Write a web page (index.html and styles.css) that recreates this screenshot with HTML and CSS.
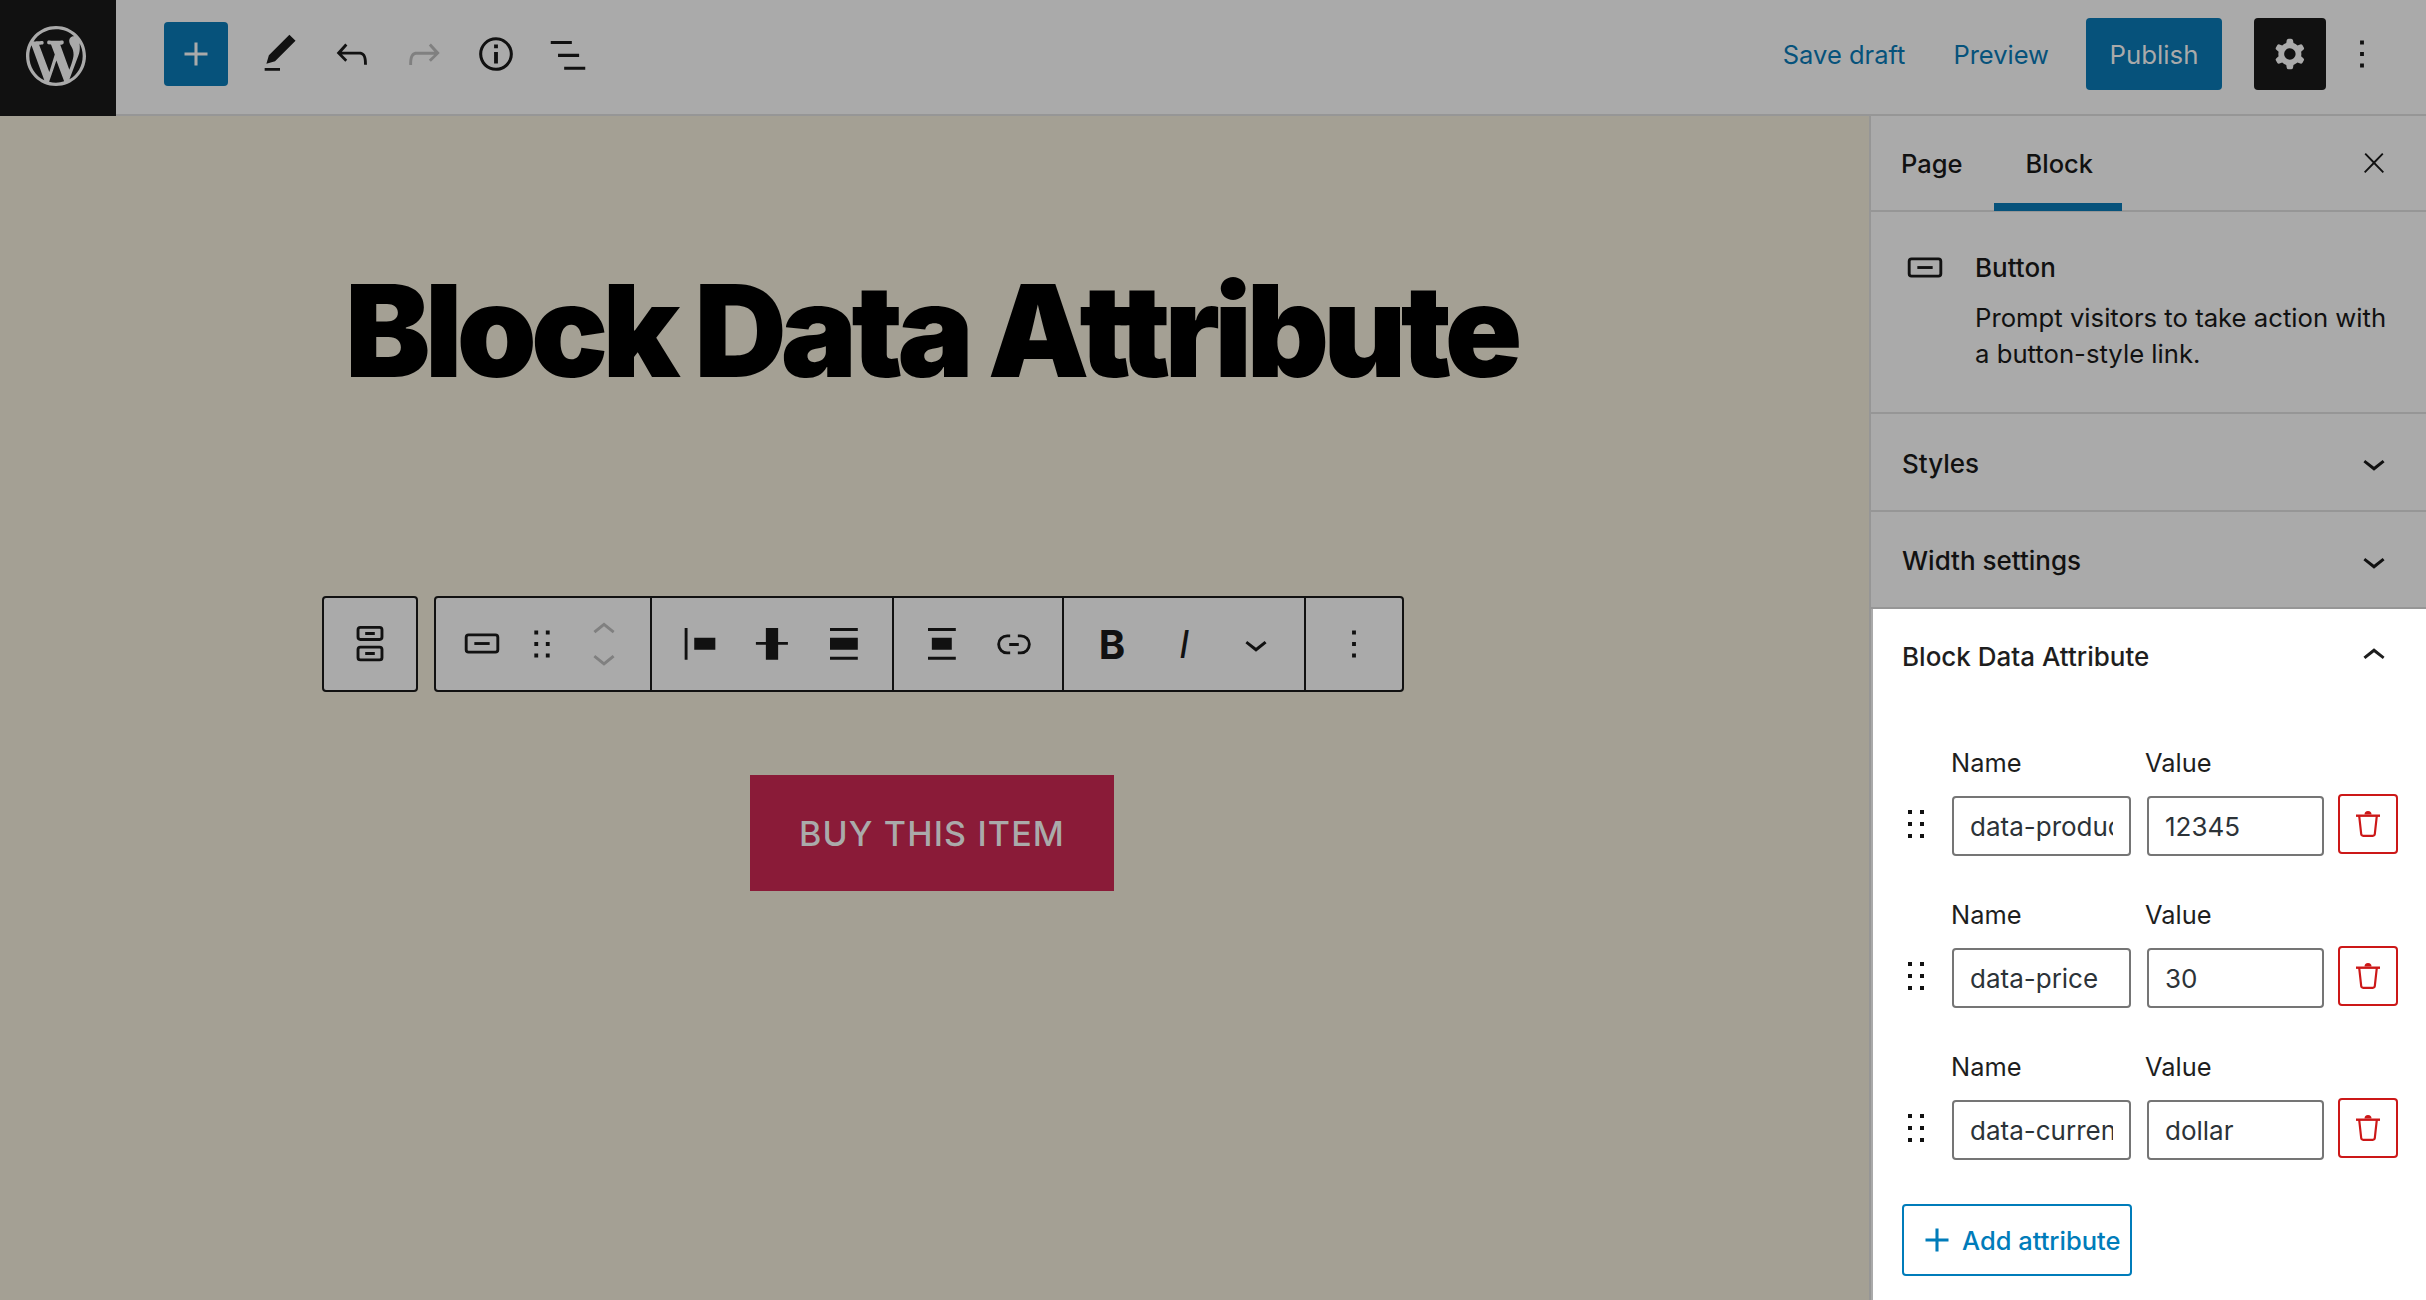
FILE: index.html
```html
<!DOCTYPE html>
<html lang="en">
<head>
    <meta charset="UTF-8">
    <meta name="viewport" content="width=device-width, initial-scale=1.0">
    <title>Block Data Attribute</title>
    <link rel="stylesheet" href="styles.css">
</head>
<body>
    <header class="topbar">
        <div class="wp-logo">
            <svg class="wp-mark" viewBox="-2 -2 24 24"><path d="M20 10c0-5.51-4.49-10-10-10C4.48 0 0 4.49 0 10c0 5.52 4.48 10 10 10 5.51 0 10-4.48 10-10zM7.78 15.37L4.37 6.22c.55-.02 1.17-.08 1.17-.08.5-.06.44-1.13-.06-1.11 0 0-1.45.11-2.37.11-.18 0-.37 0-.58-.01C4.12 2.69 6.87 1.11 10 1.11c2.33 0 4.45.87 6.05 2.34-.68-.11-1.65.39-1.65 1.58 0 .74.45 1.36.9 2.1.35.61.55 1.36.55 2.46 0 1.49-1.4 5-1.4 5l-3.03-8.37c.54-.02.82-.17.82-.17.5-.05.44-1.25-.06-1.22 0 0-1.44.12-2.38.12-.87 0-2.33-.12-2.33-.12-.5-.03-.56 1.2-.06 1.22l.92.08 1.26 3.41zM17.41 10c.24-.64.74-1.87.43-4.25.7 1.29 1.05 2.71 1.05 4.25 0 3.29-1.73 6.24-4.4 7.78.97-2.59 1.94-5.2 2.92-7.78zM6.1 18.09C3.12 16.65 1.11 13.53 1.11 10c0-1.3.23-2.48.72-3.59C3.25 10.3 4.67 14.2 6.1 18.09zm4.03-6.63l2.58 6.98c-.86.29-1.76.45-2.71.45-.79 0-1.57-.11-2.29-.33.81-2.38 1.62-4.74 2.42-7.1z"/></svg>
        </div>
        <div class="bar">
            <div class="bar-left">
                <button class="add-btn"><svg class="icon" viewBox="0 0 24 24"><path d="M18 11.2h-5.2V6h-1.6v5.2H6v1.6h5.2V18h1.6v-5.2H18z"/></svg></button>
                <span class="tool"><svg class="icon" viewBox="0 0 24 24"><path d="M20.1 5.1L16.9 2 6.2 12.7l-1.3 4.4 4.5-1.3L20.1 5.1zM4 20.8h8v-1.5H4v1.5z"/></svg></span>
                <span class="tool"><svg class="icon" viewBox="0 0 24 24"><path d="M18.3 11.7c-.6-.6-1.4-.9-2.3-.9H6.7l2.9-3.3-1.1-1-4.5 5L8.5 16l1-1-2.7-2.7H16c.5 0 .9.2 1.3.5 1 1 1 3.4 1 4.5v.3h1.5v-.2c0-1.5 0-4.3-1.5-5.7z"/></svg></span>
                <span class="tool tool-off"><svg class="icon" viewBox="0 0 24 24"><path d="M15.6 6.5l-1.1 1 2.9 3.3H8c-.9 0-1.7.3-2.3.9-1.4 1.5-1.4 4.2-1.4 5.8v.2h1.5v-.3c0-1.1 0-3.5 1-4.5.3-.3.7-.5 1.3-.5h9.2L14.5 15l1.1 1.1 4.6-4.6-4.6-5z"/></svg></span>
                <span class="tool"><svg class="icon" viewBox="0 0 24 24"><path d="M12 3.2c-4.8 0-8.8 3.9-8.8 8.8 0 4.8 3.9 8.8 8.8 8.8 4.8 0 8.8-3.9 8.8-8.8 0-4.8-4-8.8-8.8-8.8zm0 16c-4 0-7.2-3.3-7.2-7.2C4.8 8 8 4.8 12 4.8s7.2 3.3 7.2 7.2c0 4-3.2 7.2-7.2 7.2zM11 17h2v-6h-2v6zm0-8h2V7h-2v2z"/></svg></span>
                <span class="tool"><svg class="icon" viewBox="0 0 24 24"><path d="M3 5.2h11v1.6H3zM6.800 11.900h11v1.600h-11zM10 18.600h11v1.600H10z"/></svg></span>
            </div>
            <div class="bar-right">
                <a class="link save-link">Save draft</a>
                <a class="link preview-link">Preview</a>
                <button class="publish-btn">Publish</button>
                <button class="settings-btn"><svg class="icon" viewBox="0 0 24 24"><path fill-rule="evenodd" d="M10.289 4.836A1 1 0 0111.275 4h1.306a1 1 0 01.987.836l.244 1.466c.787.26 1.503.679 2.108 1.218l1.393-.522a1 1 0 011.216.437l.653 1.13a1 1 0 01-.23 1.273l-1.148.944a6.025 6.025 0 010 2.435l1.149.946a1 1 0 01.23 1.272l-.653 1.13a1 1 0 01-1.216.437l-1.394-.522c-.605.54-1.32.958-2.108 1.218l-.244 1.466a1 1 0 01-.987.836h-1.306a1 1 0 01-.986-.836l-.244-1.466a5.995 5.995 0 01-2.108-1.218l-1.394.522a1 1 0 01-1.217-.436l-.653-1.131a1 1 0 01.23-1.272l1.149-.946a6.026 6.026 0 010-2.435l-1.148-.944a1 1 0 01-.23-1.272l.653-1.131a1 1 0 011.217-.437l1.393.522a5.994 5.994 0 012.108-1.218l.244-1.466zM14.929 12a3 3 0 11-6 0 3 3 0 016 0z"/></svg></button>
                <svg class="icon" viewBox="0 0 24 24"><path d="M13 19h-2v-2h2v2zm0-6h-2v-2h2v2zm0-6h-2V5h2v2z"/></svg>
            </div>
        </div>
    </header>

    <div class="layout">
        <main class="canvas">
            <h1 class="page-title">Block Data Attribute</h1>

            <div class="block-tools">
                <div class="tool-box parent-box">
                    <svg class="icon" viewBox="0 0 24 24"><path fill-rule="evenodd" d="M7 2.600h10a2 2 0 0 1 2 2v3.800a2 2 0 0 1-2 2H7a2 2 0 0 1-2-2V4.600a2 2 0 0 1 2-2zm0 1.500a.5.5 0 0 0-.5.5v3.800a.5.5 0 0 0 .5.5h10a.5.5 0 0 0 .5-.5V4.600a.5.5 0 0 0-.5-.5zM7 12.900h10a2 2 0 0 1 2 2V19a2 2 0 0 1-2 2H7a2 2 0 0 1-2-2v-4.100a2 2 0 0 1 2-2zm0 1.500a.5.5 0 0 0-.5.5V19a.5.5 0 0 0 .5.5h10a.5.5 0 0 0 .5-.5v-4.100a.5.5 0 0 0-.5-.5zM9.500 5.800h5v1.500h-5zM9.500 16.200h5v1.500h-5z"/></svg>
                </div>
                <div class="tool-box">
                    <div class="tool-group first-group">
                        <span class="tbtn"><svg class="icon" viewBox="0 0 24 24"><path d="M8 12.500h8V11H8v1.500z"/><path d="M19 6.500H5a2 2 0 00-2 2V15a2 2 0 002 2h14a2 2 0 002-2V8.500a2 2 0 00-2-2zm.5 8.500a.5.5 0 01-.5.5H5a.5.5 0 01-.5-.5V8.500A.5.5 0 015 8h14a.5.5 0 01.5.5V15z"/></svg></span>
                        <span class="tbtn drag-btn"><svg class="icon" viewBox="0 0 24 24"><path d="M8 7h2V5H8v2zm0 6h2v-2H8v2zm0 6h2v-2H8v2zm6-14v2h2V5h-2zm0 8h2v-2h-2v2zm0 6h2v-2h-2v2z"/></svg></span>
                        <span class="tbtn mover-btn tool-off"><svg class="mover" viewBox="0 0 24 36"><path d="M6.500 10.900L12 6.500l5.500 4.400-.9 1.200L12 8.500l-4.500 3.600-1-1.200zM17.500 24.700L12 29.100l-5.500-4.400.9-1.200L12 27.100l4.500-3.600 1 1.200z"/></svg></span>
                    </div>
                    <div class="tool-group">
                        <span class="tbtn"><svg class="icon" viewBox="0 0 24 24"><path d="M9 8.800v6.200h11V8.800H9zM4 20.200h1.500V3.600H4v16.600z"/></svg></span>
                        <span class="tbtn"><svg class="icon" viewBox="0 0 24 24"><path d="M8.800 3.600h6.400v16.600H8.800zM3.600 10.900h16.700v1.500H3.600z"/></svg></span>
                        <span class="tbtn"><svg class="icon" viewBox="0 0 24 24"><path d="M4.700 3.600h14.500v1.600H4.700zM4.700 18.600h14.500v1.600H4.700zM4.700 8.800h14.500V15H4.700z"/></svg></span>
                    </div>
                    <div class="tool-group">
                        <span class="tbtn"><svg class="icon" viewBox="0 0 24 24"><path d="M4.700 3.600h14.500v1.600H4.700zM4.700 18.600h14.500v1.600H4.700zM6.700 8.800h10.400V15H6.700z"/></svg></span>
                        <span class="tbtn"><svg class="icon" viewBox="0 0 24 24"><path d="M10 17.389H8.444A5.194 5.194 0 1 1 8.444 7H10v1.500H8.444a3.694 3.694 0 0 0 0 7.389H10v1.500ZM14 7h1.556a5.194 5.194 0 0 1 0 10.390H14v-1.500h1.556a3.694 3.694 0 0 0 0-7.390H14V7Zm-4.500 6h5v-1.500h-5V13Z"/></svg></span>
                    </div>
                    <div class="tool-group">
                        <span class="tbtn letter-bold">B</span>
                        <span class="tbtn letter-italic">I</span>
                        <span class="tbtn"><svg class="icon" viewBox="0 0 24 24"><path d="M17.500 11.600L12 16l-5.500-4.400.9-1.200L12 14l4.500-3.600 1 1.200z"/></svg></span>
                    </div>
                    <div class="tool-group last-group">
                        <span class="tbtn"><svg class="icon" viewBox="0 0 24 24"><path d="M13 19h-2v-2h2v2zm0-6h-2v-2h2v2zm0-6h-2V5h2v2z"/></svg></span>
                    </div>
                </div>
            </div>

            <a class="buy-btn">BUY THIS ITEM</a>
        </main>

        <aside class="sidebar">
            <div class="tabs">
                <span class="tab">Page</span>
                <span class="tab tab-active">Block</span>
                <svg class="tabs-close" viewBox="0 0 24 24"><path d="M13 11.800l6.100-6.300-1-1-6.100 6.200-6.100-6.200-1 1 6.100 6.300-6.500 6.700 1 1 6.500-6.600 6.500 6.600 1-1z"/></svg>
            </div>

            <div class="block-card">
                <svg class="icon" viewBox="0 0 24 24"><path d="M8 12.500h8V11H8v1.500z"/><path d="M19 6.500H5a2 2 0 00-2 2V15a2 2 0 002 2h14a2 2 0 002-2V8.500a2 2 0 00-2-2zm.5 8.500a.5.5 0 01-.5.5H5a.5.5 0 01-.5-.5V8.500A.5.5 0 015 8h14a.5.5 0 01.5.5V15z"/></svg>
                <div class="block-info">
                    <h2 class="block-name">Button</h2>
                    <p class="block-desc">Prompt visitors to take action with a button-style link.</p>
                </div>
            </div>

            <div class="panel-row styles-row">
                <span>Styles</span>
                <svg class="icon" viewBox="0 0 24 24"><path d="M17.500 11.600L12 16l-5.500-4.400.9-1.200L12 14l4.500-3.600 1 1.200z"/></svg>
            </div>
            <div class="panel-row">
                <span>Width settings</span>
                <svg class="icon" viewBox="0 0 24 24"><path d="M17.500 11.600L12 16l-5.500-4.400.9-1.200L12 14l4.500-3.600 1 1.200z"/></svg>
            </div>

            <section class="attr-panel">
                <div class="attr-head">
                    <span>Block Data Attribute</span>
                    <svg class="icon" viewBox="0 0 24 24"><path d="M6.500 12.400L12 8l5.500 4.400-.9 1.200L12 10l-4.500 3.600-1-1.200z"/></svg>
                </div>

                <div class="attr-list">
                    <div class="attr-row">
                        <label class="attr-label name-label">Name</label>
                        <label class="attr-label value-label">Value</label>
                        <svg class="drag" viewBox="8 5 8 14"><path d="M8 7h2V5H8v2zm0 6h2v-2H8v2zm0 6h2v-2H8v2zm6-14v2h2V5h-2zm0 8h2v-2h-2v2zm0 6h2v-2h-2v2z"/></svg>
                        <input class="attr-input name-input" type="text" value="data-product" readonly>
                        <input class="attr-input value-input" type="text" value="12345" readonly>
                        <button class="del-btn"><svg class="trash" viewBox="0 0 24 26"><path class="trash-solid" d="M8.500 3.500a3.500 3.500 0 0 1 7 0z"/><path class="trash-solid" d="M0 3.500h24v2.400H0z"/><path d="M3.200 5l2 18a2 2 0 0 0 2 1.800h9.600a2 2 0 0 0 2-1.800l2-18"/></svg></button>
                    </div>
                    <div class="attr-row">
                        <label class="attr-label name-label">Name</label>
                        <label class="attr-label value-label">Value</label>
                        <svg class="drag" viewBox="8 5 8 14"><path d="M8 7h2V5H8v2zm0 6h2v-2H8v2zm0 6h2v-2H8v2zm6-14v2h2V5h-2zm0 8h2v-2h-2v2zm0 6h2v-2h-2v2z"/></svg>
                        <input class="attr-input name-input" type="text" value="data-price" readonly>
                        <input class="attr-input value-input" type="text" value="30" readonly>
                        <button class="del-btn"><svg class="trash" viewBox="0 0 24 26"><path class="trash-solid" d="M8.500 3.500a3.500 3.500 0 0 1 7 0z"/><path class="trash-solid" d="M0 3.500h24v2.400H0z"/><path d="M3.200 5l2 18a2 2 0 0 0 2 1.800h9.600a2 2 0 0 0 2-1.800l2-18"/></svg></button>
                    </div>
                    <div class="attr-row">
                        <label class="attr-label name-label">Name</label>
                        <label class="attr-label value-label">Value</label>
                        <svg class="drag" viewBox="8 5 8 14"><path d="M8 7h2V5H8v2zm0 6h2v-2H8v2zm0 6h2v-2H8v2zm6-14v2h2V5h-2zm0 8h2v-2h-2v2zm0 6h2v-2h-2v2z"/></svg>
                        <input class="attr-input name-input" type="text" value="data-currency" readonly>
                        <input class="attr-input value-input" type="text" value="dollar" readonly>
                        <button class="del-btn"><svg class="trash" viewBox="0 0 24 26"><path class="trash-solid" d="M8.500 3.500a3.500 3.500 0 0 1 7 0z"/><path class="trash-solid" d="M0 3.500h24v2.400H0z"/><path d="M3.200 5l2 18a2 2 0 0 0 2 1.800h9.600a2 2 0 0 0 2-1.800l2-18"/></svg></button>
                    </div>
                </div>

                <button class="add-attr"><svg class="icon" viewBox="0 0 24 24"><path d="M18 11.200h-5.200V6h-1.600v5.200H6v1.600h5.200V18h1.600v-5.200H18z"/></svg>Add attribute</button>
            </section>
        </aside>
    </div>
</body>
</html>
```

FILE: styles.css
```css
* {
    box-sizing: border-box;
}

body {
    font-family: Inter, "Noto Sans", sans-serif;
    font-size: 26px;
    color: #111;
    margin: 0;
    width: 2426px;
    height: 1300px;
    overflow: hidden;
    background: #aaa;
}

button {
    font: inherit;
    border: none;
    padding: 0;
}

.icon {
    display: block;
    width: 46px;
    height: 46px;
    fill: currentColor;
    flex: none;
}

/* top bar */

.topbar {
    display: flex;
    height: 116px;
}

.wp-logo {
    width: 116px;
    height: 116px;
    padding: 0 4px 4px 0;
    background: #111;
    display: flex;
    justify-content: center;
    align-items: center;
}

.wp-mark {
    width: 72px;
    height: 72px;
    fill: #aaa;
}

.bar {
    flex: 1;
    display: flex;
    align-items: center;
    justify-content: space-between;
    padding: 0 41px 6px 48px;
    border-bottom: 2px solid #969696;
}

.bar-left,
.bar-right {
    display: flex;
    align-items: center;
}

.add-btn {
    width: 64px;
    height: 64px;
    margin-right: 16px;
    background: #06527b;
    color: #aaa;
    border-radius: 4px;
    display: flex;
    justify-content: center;
    align-items: center;
}

.tool {
    width: 72px;
    display: flex;
    justify-content: center;
}

.tool-off {
    color: #808080;
}

.link {
    color: #06527b;
    font-size: 25.5px;
}

.save-link {
    margin-right: 48px;
}

.preview-link {
    margin-right: 37px;
}

.publish-btn {
    width: 136px;
    height: 72px;
    margin-right: 32px;
    background: #06527b;
    color: #aaa;
    border-radius: 4px;
    font-size: 25.8px;
}

.settings-btn {
    width: 72px;
    height: 72px;
    margin-right: 13px;
    background: #111;
    color: #aaa;
    border-radius: 4px;
    display: flex;
    justify-content: center;
    align-items: center;
}

/* editor canvas */

.layout {
    display: flex;
    height: 1184px;
}

.canvas {
    flex: 1;
    display: flex;
    flex-direction: column;
    align-items: flex-start;
    padding: 135px 0 0 322px;
    background: #a4a094;
}

.page-title {
    margin: 0 0 0 23px;
    font-size: 128px;
    line-height: 160px;
    font-weight: 900;
    letter-spacing: -0.045em;
    white-space: nowrap;
    color: #000;
}

.block-tools {
    display: flex;
    gap: 16px;
    margin-top: 185px;
}

.tool-box {
    height: 96px;
    display: flex;
    background: #aaa;
    border: 2px solid #111;
    border-radius: 4px;
}

.parent-box {
    width: 96px;
    justify-content: center;
    align-items: center;
}

.tool-group {
    display: flex;
    padding: 0 12px;
    border-right: 2px solid #111;
}

.first-group {
    padding: 0 10px;
}

.last-group {
    border-right: none;
}

.tbtn {
    width: 72px;
    display: flex;
    justify-content: center;
    align-items: center;
}

.drag-btn {
    width: 48px;
}

.mover-btn {
    width: 74px;
    padding-left: 1px;
}

.mover {
    width: 46px;
    height: 69px;
    fill: currentColor;
}

.letter-bold {
    font-size: 40px;
    font-weight: 700;
}

.letter-italic {
    font-size: 38px;
    font-style: italic;
    font-weight: 400;
}

.buy-btn {
    margin: 83px 0 0 428px;
    width: 364px;
    height: 116px;
    background: #8a1b38;
    color: #aaa;
    font-size: 34px;
    font-weight: 500;
    letter-spacing: 1.15px;
    display: flex;
    justify-content: center;
    align-items: center;
}

/* settings sidebar */

.sidebar {
    width: 557px;
    flex: none;
    border-left: 2px solid #969696;
    font-weight: 500;
}

.tabs {
    height: 96px;
    display: flex;
    align-items: center;
    border-bottom: 2px solid #969696;
    font-size: 25.5px;
}

.tab {
    height: 95px;
    padding: 0 29px 0 32px;
    display: flex;
    align-items: center;
}

.tab:first-child {
    padding: 0 31px 0 30px;
}

.tab-active {
    border-bottom: 8px solid #06527b;
    padding-top: 8px;
}

.tabs-close {
    width: 32px;
    height: 32px;
    margin: 0 36px 0 auto;
    fill: currentColor;
}

.block-card {
    display: flex;
    gap: 27px;
    padding: 38px 20px 40px 31px;
    border-bottom: 2px solid #969696;
}

.block-card > .icon {
    margin-top: -5px;
}

.block-info {
    flex: 1;
}

.block-name {
    margin: 0 0 14px;
    font-size: 26px;
    font-weight: 500;
    line-height: 36px;
}

.block-desc {
    margin: 0;
    font-size: 25.7px;
    font-weight: 400;
    line-height: 36px;
}

.panel-row {
    height: 97px;
    display: flex;
    align-items: center;
    justify-content: space-between;
    padding: 2px 29px 0 31px;
    border-bottom: 2px solid #969696;
}

.styles-row {
    height: 98px;
}

.attr-panel {
    margin-left: 2px;
    height: 700px;
    background: #fff;
    color: #1e1e1e;
}

.attr-head {
    height: 94px;
    display: flex;
    align-items: center;
    justify-content: space-between;
    padding: 0 29px;
}

.attr-list {
    display: flex;
    flex-direction: column;
    gap: 41px;
    padding: 42px 0 0 35px;
}

.attr-row {
    display: grid;
    grid-template-columns: 28px 179px 177px 60px;
    column-gap: 16px;
    row-gap: 15px;
    align-items: center;
}

.attr-label {
    font-size: 25.4px;
    font-weight: 400;
    line-height: 36px;
    grid-row: 1;
}

.name-label {
    grid-column: 2;
    margin-left: -1px;
}

.value-label {
    grid-column: 3;
    margin-left: -2px;
}

.drag {
    grid-column: 1;
    grid-row: 2;
    width: 16px;
    height: 28px;
    margin-top: -4px;
    fill: #111;
}

.attr-input {
    width: 100%;
    height: 60px;
    padding: 0 16px;
    font: inherit;
    font-weight: 400;
    color: #2c3338;
    background: #fff;
    border: 2px solid #757575;
    border-radius: 4px;
    outline: none;
    grid-row: 2;
}

.name-input {
    grid-column: 2;
}

.value-input {
    grid-column: 3;
}

.del-btn {
    grid-column: 4;
    grid-row: 2;
    width: 60px;
    height: 60px;
    margin: -4px 0 0 -2px;
    background: #fff;
    border: 2px solid #cc1818;
    border-radius: 4px;
    display: flex;
    justify-content: center;
    align-items: center;
}

.trash {
    width: 24px;
    height: 26px;
    fill: none;
    stroke: #cc1818;
    stroke-width: 2.2;
}

.trash .trash-solid {
    fill: #cc1818;
    stroke: none;
}

.add-attr {
    width: 230px;
    height: 72px;
    margin: 44px 0 0 29px;
    padding-left: 10px;
    display: flex;
    align-items: center;
    gap: 2px;
    color: #007cba;
    background: #fff;
    border: 2px solid #007cba;
    border-radius: 4px;
    white-space: nowrap;
    font-size: 25.5px;
    font-weight: 500;
}
```
